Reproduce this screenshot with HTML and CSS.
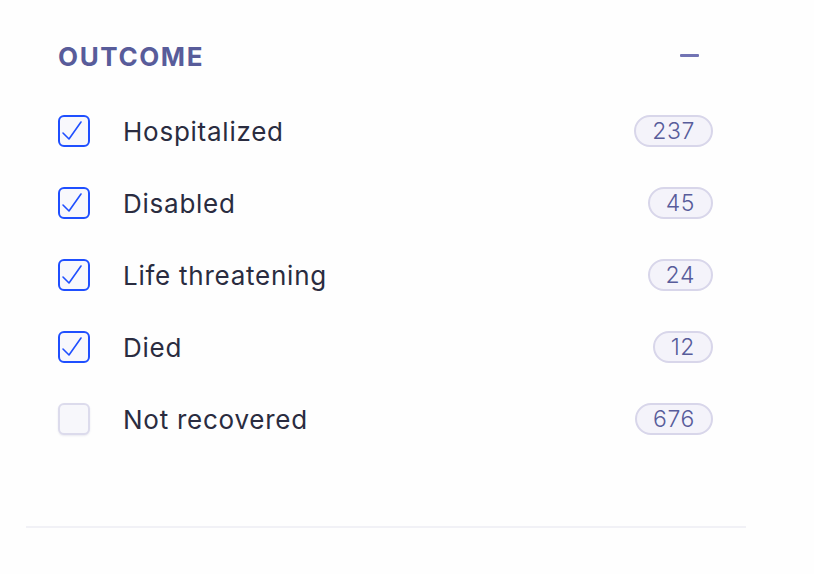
FILE: index.html
```html
<!DOCTYPE html>
<html>
<head>
<meta charset="utf-8">
<link rel="stylesheet" href="styles.css">
</head>
<body>
<div class="panel">
  <div class="section">
    <div class="header">
      <h2 class="title">OUTCOME</h2>
      <span class="collapse"></span>
    </div>
    <ul class="list">
      <li class="row">
        <span class="box checked"><svg viewBox="0 0 32 32" width="32" height="32"><path d="M5 18 L11 24 L23 7" fill="none" stroke="#1f4fff" stroke-width="1.6" stroke-linecap="round" stroke-linejoin="round"/></svg></span>
        <span class="label">Hospitalized</span>
        <span class="badge">237</span>
      </li>
      <li class="row">
        <span class="box checked"><svg viewBox="0 0 32 32" width="32" height="32"><path d="M5 18 L11 24 L23 7" fill="none" stroke="#1f4fff" stroke-width="1.6" stroke-linecap="round" stroke-linejoin="round"/></svg></span>
        <span class="label">Disabled</span>
        <span class="badge">45</span>
      </li>
      <li class="row">
        <span class="box checked"><svg viewBox="0 0 32 32" width="32" height="32"><path d="M5 18 L11 24 L23 7" fill="none" stroke="#1f4fff" stroke-width="1.6" stroke-linecap="round" stroke-linejoin="round"/></svg></span>
        <span class="label">Life threatening</span>
        <span class="badge">24</span>
      </li>
      <li class="row">
        <span class="box checked"><svg viewBox="0 0 32 32" width="32" height="32"><path d="M5 18 L11 24 L23 7" fill="none" stroke="#1f4fff" stroke-width="1.6" stroke-linecap="round" stroke-linejoin="round"/></svg></span>
        <span class="label">Died</span>
        <span class="badge">12</span>
      </li>
      <li class="row">
        <span class="box"></span>
        <span class="label">Not recovered</span>
        <span class="badge">676</span>
      </li>
    </ul>
  </div>
  <div class="divider"></div>
</div>
</body>
</html>
```
FILE: styles.css
```css
html, body {
  margin: 0;
  padding: 0;
  background: #fefefe;
}
body {
  font-family: Inter, "Noto Sans", sans-serif;
}
.panel {
  width: 720px;
  margin-left: 26px;
}
.section {
  padding: 38px 33px 0 32px;
  height: 526px;
  box-sizing: border-box;
}
.header {
  display: flex;
  align-items: center;
  justify-content: space-between;
  height: 36px;
  padding-right: 14px;
}
.title {
  margin: 0;
  font-size: 26px;
  font-weight: 700;
  color: #585c9a;
  letter-spacing: 1.6px;
}
.collapse {
  display: block;
  width: 19px;
  height: 3px;
  margin-top: -2px;
  background: #7274b4;
  border-radius: 1px;
}
.list {
  list-style: none;
  margin: 21px 0 0 0;
  padding: 0;
}
.row {
  display: flex;
  align-items: center;
  height: 72px;
}
.box {
  width: 32px;
  height: 32px;
  box-sizing: border-box;
  border: 2px solid #dcdbec;
  border-radius: 6px;
  background: #f7f7fb;
  box-shadow: 0 1px 2px rgba(80, 80, 140, 0.12);
  flex: none;
  position: relative;
}
.box.checked {
  border-color: #1f4fff;
  background: #f8f8fc;
  box-shadow: none;
}
.box svg {
  position: absolute;
  left: -2px;
  top: -2px;
}
.label {
  margin-left: 33px;
  font-size: 26px;
  letter-spacing: 0.75px;
  color: #2a2c40;
  flex: 1;
}
.badge {
  box-sizing: border-box;
  height: 32px;
  padding: 0 16px;
  border: 2px solid #d8d6ea;
  border-radius: 16px;
  background: #f4f3fa;
  color: #585c9a;
  font-size: 23px;
  font-weight: 300;
  letter-spacing: 0.6px;
  line-height: 28px;
  display: flex;
  align-items: center;
}
.divider {
  height: 2px;
  background: #f1f1f6;
}
```
